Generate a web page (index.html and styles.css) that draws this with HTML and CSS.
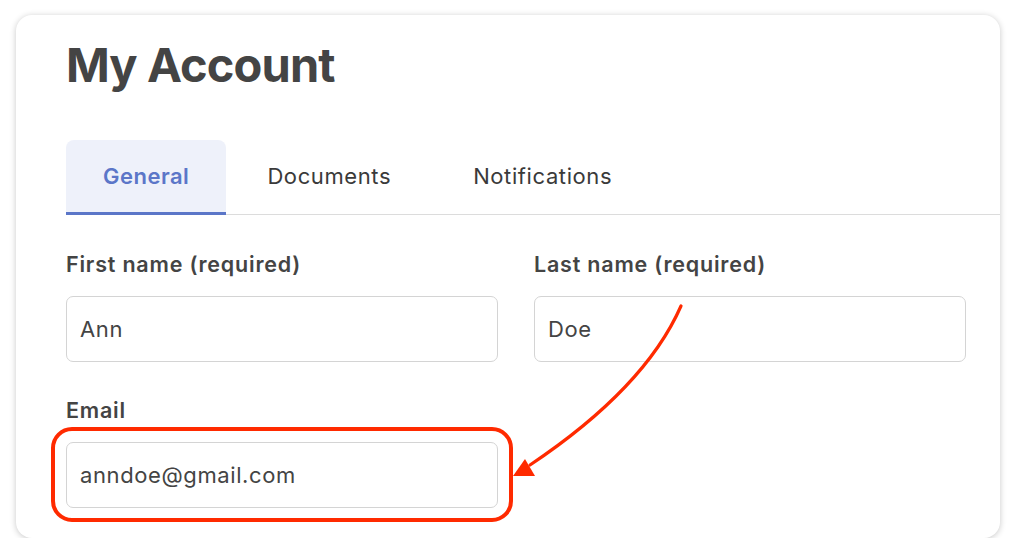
FILE: index.html
```html
<!DOCTYPE html>
<html lang="en">
<head>
    <meta charset="UTF-8">
    <meta name="viewport" content="width=device-width, initial-scale=1.0">
    <title>My Account</title>
    <link rel="stylesheet" href="styles.css">
</head>
<body>
    <div class="account-card">
        <h1>My Account</h1>
        <div class="tabs">
            <div class="tab active">General</div>
            <div class="tab">Documents</div>
            <div class="tab">Notifications</div>
        </div>
        <form class="account-form">
            <div class="field">
                <label for="first_name">First name (required)</label>
                <input type="text" id="first_name" value="Ann">
            </div>
            <div class="field">
                <label for="last_name">Last name (required)</label>
                <input type="text" id="last_name" value="Doe">
            </div>
            <div class="field">
                <label for="email">Email</label>
                <input type="email" id="email" value="anndoe@gmail.com">
            </div>
        </form>
        <!-- annotation drawn over the form -->
        <svg class="annotation" width="1016" height="554" viewBox="0 0 1016 554">
            <rect x="53" y="429" width="458" height="91" rx="19" fill="none" stroke="#ff2a00" stroke-width="4"/>
            <path d="M681 306 Q645 388 530 465" fill="none" stroke="#ff2a00" stroke-width="3.2" stroke-linecap="round"/>
            <polygon points="513,476 525,459 535,476" fill="#ff2a00"/>
        </svg>
    </div>
</body>
</html>
```

FILE: styles.css
```css
body {
    margin: 0;
    background: #fff;
    font-family: 'Inter', 'Liberation Sans', Arial, sans-serif;
    color: #444;
}
.account-card {
    box-sizing: border-box;
    width: 984px;
    height: 523px;
    margin: 15px 0 0 16px;
    padding: 22px 0 0 50px;
    background: #fff;
    border-radius: 16px;
    box-shadow: 0 1px 6px rgba(0, 0, 0, 0.22);
}
h1 {
    margin: 0 0 47px 0;
    font-size: 47px;
    line-height: 56px;
    font-weight: 700;
    letter-spacing: -0.9px;
    color: #444;
}
/* onglets */
.tabs {
    display: flex;
    border-bottom: 1px solid #dcdcdc;
}
.tab {
    height: 72px;
    display: flex;
    align-items: center;
    padding: 0 41px;
    font-size: 22px;
    letter-spacing: 0.6px;
    color: #3a3a3a;
    border-bottom: 3px solid transparent;
    margin-bottom: -1px;
}
.tab.active {
    padding: 0 37px;
    background: #eef1fa;
    border-radius: 8px 8px 0 0;
    border-bottom-color: #5b76c8;
    color: #5b76c8;
    font-weight: 600;
    letter-spacing: 0.5px;
}
/* formulaire */
.account-form {
    display: grid;
    grid-template-columns: 432px 432px;
    column-gap: 36px;
    row-gap: 35px;
    margin-top: 36px;
}
.field label {
    display: block;
    font-size: 21.5px;
    line-height: 26px;
    font-weight: 600;
    letter-spacing: 0.8px;
    color: #444;
    margin-bottom: 19px;
}
.field input {
    box-sizing: border-box;
    width: 100%;
    height: 66px;
    padding: 0 13px;
    border: 1px solid #d4d4d4;
    border-radius: 7px;
    font-family: inherit;
    font-size: 22px;
    letter-spacing: 0.6px;
    color: #444;
    background: #fff;
    outline: none;
}
.annotation {
    position: absolute;
    left: 0;
    top: 0;
    pointer-events: none;
}
```
